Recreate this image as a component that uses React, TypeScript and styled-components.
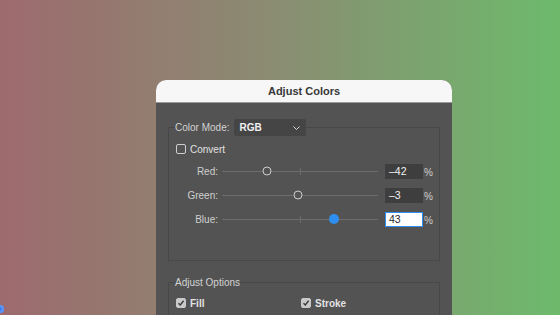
import React from "react";
import styled, { createGlobalStyle } from "styled-components";

const Global = createGlobalStyle`
  html, body { margin: 0; padding: 0; }
  body {
    width: 560px;
    height: 315px;
    overflow: hidden;
    font-family: "Liberation Sans", Arial, sans-serif;
    background: linear-gradient(90deg, #9d6a6e 0%, #8a8d72 50%, #6dba6c 100%);
  }
`;

const Page = styled.div`
  position: relative;
  width: 560px;
  height: 315px;
  padding: 80px 0 0 156px;
  box-sizing: border-box;
`;

const Dialog = styled.div`
  width: 296px;
  height: 235px;
  background: #535353;
  border-radius: 10px 10px 0 0;
  overflow: hidden;
  display: flex;
  flex-direction: column;
`;

const Header = styled.div`
  height: 22px;
  flex: none;
  background: #f7f7f7;
  border-bottom: 1px solid #9a9a9a;
  display: flex;
  align-items: center;
  justify-content: center;
  font-size: 11px;
  font-weight: bold;
  color: #383838;
`;

const Body = styled.div`
  padding: 16px 12px 0 12px;
  display: flex;
  flex-direction: column;
`;

const Group = styled.fieldset<{ $mt?: number }>`
  margin: ${(p) => p.$mt ?? 0}px 0 0 0;
  border: 1px solid #484848;
  padding: 6px 0 0 7px;
  min-width: 0;
  display: flex;
  flex-direction: column;
  &:last-child { padding-bottom: 40px; }
`;

const Legend = styled.legend`
  padding: 0;
  margin-left: -1px;
  display: flex;
  align-items: center;
  gap: 5px;
  font-size: 10px;
  color: #d2d2d2;
`;

const Select = styled.div`
  width: 72px;
  height: 17px;
  box-sizing: border-box;
  background: #454545;
  border-radius: 2px;
  display: flex;
  align-items: center;
  justify-content: space-between;
  padding: 0 6px 0 5px;
  font-size: 10px;
  font-weight: bold;
  color: #f0f0f0;
`;

const CheckRow = styled.div`
  height: 14px;
  display: flex;
  align-items: center;
`;

const CheckItem = styled.label<{ $w?: number }>`
  display: flex;
  align-items: center;
  gap: 4px;
  width: ${(p) => (p.$w ? `${p.$w}px` : "auto")};
  font-size: 10px;
  color: #e2e2e2;
  font-weight: ${(p) => (p.$w ? "bold" : "normal")};
`;

const Box = styled.span<{ $checked?: boolean }>`
  width: 10px;
  height: 10px;
  box-sizing: border-box;
  border-radius: 2px;
  border: 1px solid ${(p) => (p.$checked ? "#c9c9c9" : "#cfcfcf")};
  background: ${(p) => (p.$checked ? "#c9c9c9" : "transparent")};
  display: flex;
  align-items: center;
  justify-content: center;
`;

const Sliders = styled.div`
  margin-top: 7px;
  display: flex;
  flex-direction: column;
  gap: 8px;
  padding-bottom: 33px;
`;

const SliderRow = styled.div`
  height: 16px;
  display: flex;
  align-items: center;
`;

const SliderLabel = styled.span`
  width: 42px;
  text-align: right;
  font-size: 10px;
  color: #cfcfcf;
`;

const Track = styled.div`
  position: relative;
  margin-left: 4px;
  width: 156px;
  height: 1px;
  background: #6d6d6d;
`;

const Tick = styled.div`
  position: absolute;
  left: 78px;
  top: -3px;
  width: 1px;
  height: 7px;
  background: #6d6d6d;
`;

const Thumb = styled.div<{ $active?: boolean }>`
  position: absolute;
  top: 0;
  width: ${(p) => (p.$active ? 10 : 9)}px;
  height: ${(p) => (p.$active ? 10 : 9)}px;
  box-sizing: border-box;
  border-radius: 50%;
  transform: translate(-50%, -50%);
  background: ${(p) => (p.$active ? "#2f8ff0" : "#535353")};
  border: ${(p) => (p.$active ? "none" : "1.5px solid #cdcdcd")};
`;

const ValueInput = styled.div<{ $active?: boolean }>`
  margin-left: 7px;
  width: 38px;
  height: 15px;
  box-sizing: border-box;
  display: flex;
  align-items: center;
  padding-left: 3px;
  font-size: 10.5px;
  background: ${(p) => (p.$active ? "#ffffff" : "#3e3e3e")};
  color: ${(p) => (p.$active ? "#2a2a2a" : "#f2f2f2")};
  border: 1px solid ${(p) => (p.$active ? "#2f8ff0" : "#3e3e3e")};
`;

const Pct = styled.span`
  margin-left: 1px;
  font-size: 10px;
  color: #cfcfcf;
  padding-top: 3px;
`;

const OptionsBody = styled.div`
  margin-top: 2px;
`;

const EdgeDot = styled.div`
  position: absolute;
  left: -4px;
  top: 305px;
  width: 8px;
  height: 8px;
  border-radius: 50%;
  background: #3d7ef0;
  box-shadow: inset 0 0 0 2px #5e96f5;
`;

const Chevron = () => (
  <svg width="7" height="4" viewBox="0 0 7 4">
    <path d="M0.5 0.5 L3.5 3.5 L6.5 0.5" fill="none" stroke="#d8d8d8" strokeWidth="1" />
  </svg>
);

const Check = () => (
  <svg width="8" height="8" viewBox="0 0 8 8">
    <path d="M1.5 4.2 L3.3 6 L6.6 1.8" fill="none" stroke="#3a3a3a" strokeWidth="1.4" />
  </svg>
);

const channels = [
  { name: "Red:", value: -42 },
  { name: "Green:", value: -3 },
  { name: "Blue:", value: 43, active: true },
];

export default function App() {
  return (
    <>
      <Global />
      <Page>
        <Dialog>
          <Header>Adjust Colors</Header>
          <Body>
            <Group>
              <Legend>
                Color Mode:
                <Select>
                  RGB
                  <Chevron />
                </Select>
              </Legend>
              <CheckRow>
                <CheckItem>
                  <Box />
                  Convert
                </CheckItem>
              </CheckRow>
              <Sliders>
                {channels.map((c) => (
                  <SliderRow key={c.name}>
                    <SliderLabel>{c.name}</SliderLabel>
                    <Track>
                      <Tick />
                      <Thumb $active={c.active} style={{ left: `${(c.value + 100) / 2}%` }} />
                    </Track>
                    <ValueInput $active={c.active}>{c.value < 0 ? `\u2013${-c.value}` : c.value}</ValueInput>
                    <Pct>%</Pct>
                  </SliderRow>
                ))}
              </Sliders>
            </Group>
            <Group $mt={16}>
              <Legend>Adjust Options</Legend>
              <OptionsBody>
                <CheckRow>
                  <CheckItem $w={125}>
                    <Box $checked>
                      <Check />
                    </Box>
                    Fill
                  </CheckItem>
                  <CheckItem $w={80}>
                    <Box $checked>
                      <Check />
                    </Box>
                    Stroke
                  </CheckItem>
                </CheckRow>
              </OptionsBody>
            </Group>
          </Body>
        </Dialog>
        <EdgeDot />
      </Page>
    </>
  );
}
